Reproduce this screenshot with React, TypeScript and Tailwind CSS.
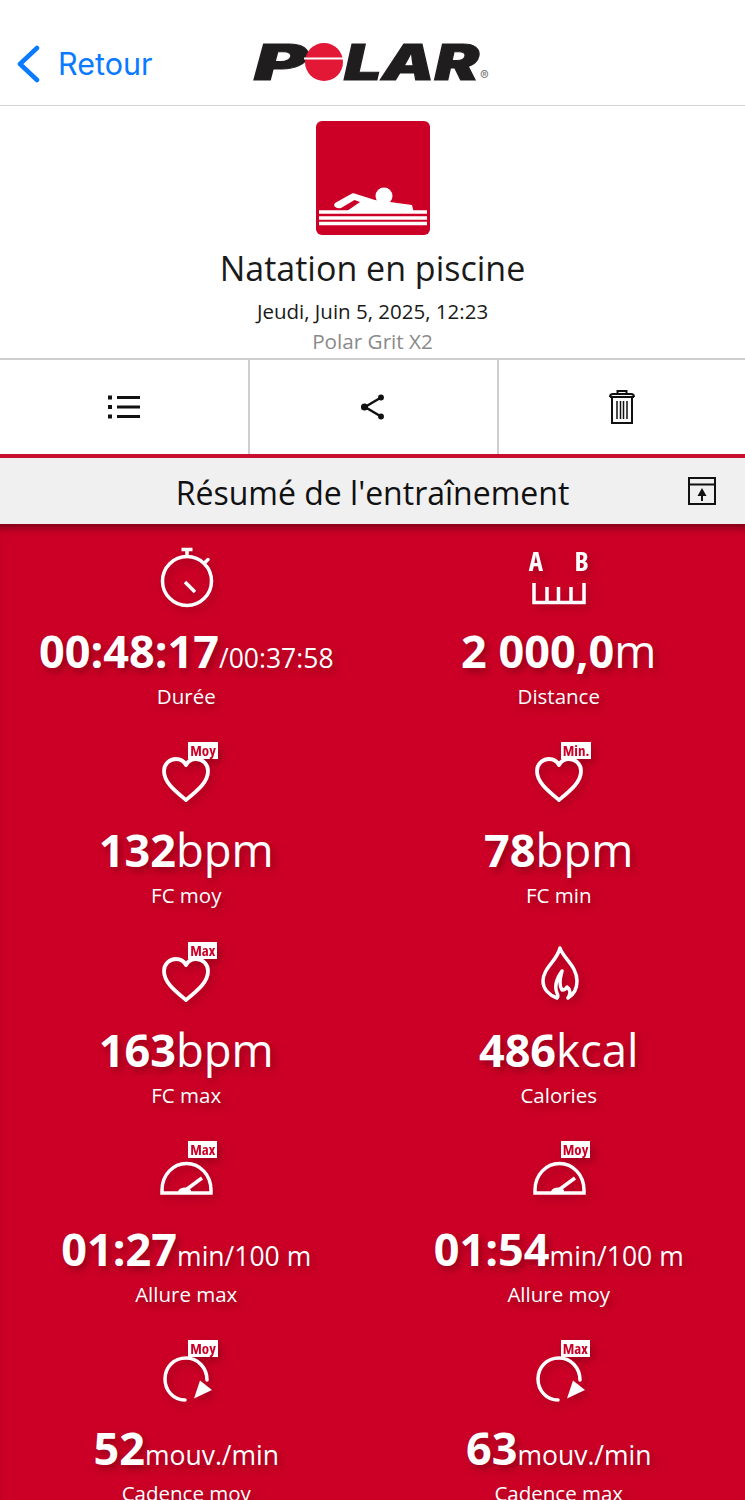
const shadow = '[text-shadow:3px_4px_7px_rgba(90,0,15,0.5)]';

const Stopwatch = () => (
  <svg width="64" height="64" viewBox="0 0 64 64" fill="none" stroke="white" strokeWidth="3.5" strokeLinecap="round">
    <circle cx="33" cy="36" r="24.500" />
    <path d="M27.500 4.500h11M33 5v6" strokeWidth="3.500" strokeLinecap="butt" />
    <path d="M51 17.500l3-3" />
    <path d="M31 37l10 10" strokeWidth="3.500" strokeLinecap="butt" />
  </svg>
);

const Ruler = () => (
  <div className="flex h-[64px] w-[64px] flex-col items-center">
    <div className="mt-[2px] flex w-[60px] justify-between font-['Open_Sans'] text-[27px] leading-[28px] font-bold text-white [font-stretch:75%]">
      <span>A</span>
      <span>B</span>
    </div>
    <svg className="mt-[8px]" width="54" height="22" viewBox="0 0 54 22" fill="none" stroke="white" strokeWidth="3.500">
      <path d="M2 0v19.500h50V0M15 4v15M26.500 4v15M39 4v15" />
    </svg>
  </div>
);

const Heart = () => (
  <svg width="64" height="64" viewBox="0 0 64 64" fill="none" stroke="white" strokeWidth="3.800" strokeLinejoin="round">
    <path d="M32 56C20 46 10 38 10 27c0-7 5.500-12 12-12 4.500 0 8 2.200 10 6 2-3.800 5.500-6 10-6 6.500 0 12 5 12 12 0 11-10 19-22 29z" />
  </svg>
);

const Flame = () => (
  <svg width="64" height="64" viewBox="0 0 64 64" fill="none" stroke="white" strokeWidth="3.500" strokeLinejoin="round" strokeLinecap="round">
    <path d="M33 4c3 10 17 18 17 33 0 8-4 14-9 17 3-5 2-9-1-11-1 2-3 3-5 3-3-4-2-12 0-19-5 7-8 15-5 22 1 2 1 4 0 5-8-3-14-9-14-17C16 24 30 17 33 4z" />
  </svg>
);

const Gauge = () => (
  <svg width="64" height="64" viewBox="0 0 64 64" fill="none" stroke="white" strokeWidth="3.500">
    <path d="M8 50V47C8 32 19 20.500 32.500 20.500S57 32 57 47v3z" />
    <path d="M29 49l19-14" strokeWidth="3.500" />
    <path d="M24 50a7 5 0 0 1 13-3v3z" fill="white" stroke="none" />
  </svg>
);

const Cadence = () => (
  <svg width="64" height="64" viewBox="0 0 64 64" fill="none" stroke="white" strokeWidth="3.500">
    <path d="M31 58C19 58 11 48 11 37c0-12 9-21 21-21 12 0 21 10 21 22" strokeLinecap="round" />
    <path d="M46 38.500l12 9.500-18 8.500z" fill="white" stroke="none" />
  </svg>
);

const Badge = ({ text }: { text: string }) => (
  <span className="absolute top-[-2px] left-[34px] min-w-[29px] bg-white px-[2px] text-center font-['Open_Sans'] text-[15px] leading-[17px] font-bold text-[#cc0026] [font-stretch:75%]">
    {text}
  </span>
);

type Stat = {
  icon: React.ReactNode;
  badge?: string;
  value: string;
  unit: string;
  small?: boolean;
  label: string;
};

const stats: Stat[] = [
  { icon: <Stopwatch />, value: '00:48:17', unit: '/00:37:58', small: true, label: 'Durée' },
  { icon: <Ruler />, value: '2 000,0', unit: 'm', label: 'Distance' },
  { icon: <Heart />, badge: 'Moy', value: '132', unit: 'bpm', label: 'FC moy' },
  { icon: <Heart />, badge: 'Min.', value: '78', unit: 'bpm', label: 'FC min' },
  { icon: <Heart />, badge: 'Max', value: '163', unit: 'bpm', label: 'FC max' },
  { icon: <Flame />, value: '486', unit: 'kcal', label: 'Calories' },
  { icon: <Gauge />, badge: 'Max', value: '01:27', unit: 'min/100 m', small: true, label: 'Allure max' },
  { icon: <Gauge />, badge: 'Moy', value: '01:54', unit: 'min/100 m', small: true, label: 'Allure moy' },
  { icon: <Cadence />, badge: 'Moy', value: '52', unit: 'mouv./min', small: true, label: 'Cadence moy' },
  { icon: <Cadence />, badge: 'Max', value: '63', unit: 'mouv./min', small: true, label: 'Cadence max' },
];

const StatCell = ({ stat }: { stat: Stat }) => (
  <div className="flex h-[199.250px] flex-col items-center text-white">
    <div className="relative h-[64px] w-[64px] drop-shadow-[3px_4px_4px_rgba(90,0,15,0.4)]">
      {stat.icon}
      {stat.badge && <Badge text={stat.badge} />}
    </div>
    <div className={`mt-[14px] flex h-[56px] items-baseline whitespace-nowrap ${shadow}`}>
      <span className="text-[45px] leading-[56px] font-bold">{stat.value}</span>
      <span className={`leading-none ${stat.small ? 'text-[26.500px]' : 'text-[45.500px]'}`}>{stat.unit}</span>
    </div>
    <div className={`mt-[3px] text-[20.500px] leading-[28px] ${shadow}`}>{stat.label}</div>
  </div>
);

const PolarLogo = () => (
  <svg className="overflow-visible" width="240" height="44" viewBox="0 0 240 44" fontFamily="Inter, 'Liberation Sans', sans-serif" fontWeight="900" fontStyle="italic">
    <text x="0" y="38" fontSize="49" fill="#1f1d1e" stroke="#1f1d1e" strokeWidth="1" textLength="53" lengthAdjust="spacingAndGlyphs">
      P
    </text>
    <circle cx="70" cy="20" r="19" fill="#e31837" />
    <rect x="50" y="15.500" width="40" height="2" fill="white" />
    <text x="90" y="38" fontSize="49" fill="#1f1d1e" stroke="#1f1d1e" strokeWidth="1" textLength="135" lengthAdjust="spacingAndGlyphs">
      LAR
    </text>
    <text x="226" y="38" fontSize="13" fontStyle="normal" fontWeight="400" fill="#777777">
      ®
    </text>
  </svg>
);

const SwimIcon = () => (
  <svg width="114" height="114" viewBox="0 0 114 114">
    <rect width="114" height="114" rx="6" fill="#cc0026" />
    <circle cx="68" cy="75" r="8.500" fill="white" />
    <path d="M19 82L36 72.500Q38 72 40 73L59 79 96 84 97.500 90H31L44 81 38.500 79 25 87Q21 88 18.500 85.500 17.500 83.500 19 82Z" fill="white" />
    <path d="M3 91h108M3 97h108M3 102.500h108" stroke="white" strokeWidth="3.500" />
  </svg>
);

export default function App() {
  return (
    <div className="relative flex h-[1500px] flex-col overflow-hidden bg-white font-['Open_Sans',sans-serif]">
      <header className="relative flex h-[106px] shrink-0 items-center justify-center border-b border-[#d4d4d4]">
        <div className="absolute top-[45px] left-[16px] flex items-center gap-[17px] font-['Inter',sans-serif] text-[#0a7aff]">
          <svg width="25" height="38" viewBox="0 0 25 38" fill="none" stroke="currentColor" strokeWidth="4.500" strokeLinecap="round" strokeLinejoin="round">
            <path d="M21 3L4 19l17 16" />
          </svg>
          <span className="text-[30.500px] leading-[38px]">Retour</span>
        </div>
        <div className="mt-[22px] ml-[3px]">
          <PolarLogo />
        </div>
      </header>

      <section className="flex h-[252px] shrink-0 flex-col items-center pt-[15px]">
        <SwimIcon />
        <h1 className="mt-[11px] text-[34px] leading-[44px] text-[#1a1a1a]">Natation en piscine</h1>
        <p className="mt-[7px] text-[20.500px] leading-[28px] text-[#1a1a1a]">Jeudi, Juin 5, 2025, 12:23</p>
        <p className="mt-[2px] text-[20.700px] leading-[28px] text-[#8a8a8a]">Polar Grit X2</p>
      </section>

      <nav className="grid h-[96px] shrink-0 grid-cols-3 border-t-2 border-[#cfcfcf]">
        <div className="flex items-center justify-center">
          <svg width="32" height="24" viewBox="0 0 32 24" fill="none" stroke="#111111" strokeWidth="3">
            <path d="M9 2.500h23M9 12h23M9 21.500h23" />
            <path d="M0 2.500h4M0 12h4M0 21.500h4" strokeWidth="4" />
          </svg>
        </div>
        <div className="flex items-center justify-center border-l-2 border-[#cfcfcf]">
          <svg width="28" height="28" viewBox="0 0 28 28" fill="#111111" stroke="#111111" strokeWidth="2.500">
            <path d="M22 4.500L6 14l16 9.500" fill="none" />
            <circle cx="22" cy="4.500" r="1.700" />
            <circle cx="5.500" cy="14" r="2.300" />
            <circle cx="22" cy="23.500" r="1.700" />
          </svg>
        </div>
        <div className="flex items-center justify-center border-l-2 border-[#cfcfcf]">
          <svg width="26" height="36" viewBox="0 0 26 36" fill="none" stroke="#111111" strokeWidth="2">
            <path d="M1 8Q1 5 4 5h18q3 0 3 3M1 8h24M8.500 5V2h9v3M3 8v26h20V8" />
            <path d="M8 12v18M11.500 12v18M14.500 12v18M18 12v18" strokeWidth="1.500" />
          </svg>
        </div>
      </nav>

      <div className="flex h-[70px] shrink-0 items-center justify-center border-t-4 border-[#c8102e] bg-[#f0f0f0]">
        <h2 className="mt-[3px] text-[32px] leading-[40px] text-[#111111]">Résumé de l'entraînement</h2>
        <svg className="absolute left-[687px]" width="30" height="30" viewBox="0 0 30 30" fill="none" stroke="#111111" strokeWidth="2">
          <path d="M2 2h26v26H2zM2 8.500h26M15 25V14" />
          <path d="M15 12l4.500 8h-9z" fill="#111111" stroke="none" />
        </svg>
      </div>

      <main className="grid flex-1 grid-cols-2 content-start bg-[#cc0026] pt-[21px] shadow-[inset_0_10px_8px_-6px_rgba(90,0,15,0.7)]">
        {stats.map((stat) => (
          <StatCell key={stat.label} stat={stat} />
        ))}
      </main>
    </div>
  );
}
